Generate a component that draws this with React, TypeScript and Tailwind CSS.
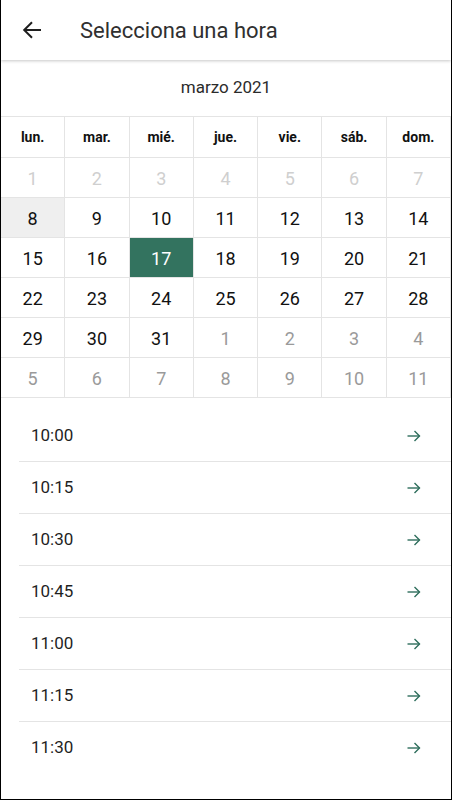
import React from "react";

const font = { fontFamily: "Roboto, 'Noto Sans', sans-serif" };

function BackArrow() {
  return (
    <svg width="20" height="20" viewBox="0 0 20 20" fill="none">
      <path d="M19 10H2.5" stroke="#1f1f1f" strokeWidth="2" />
      <path d="M10 2.2L2.2 10L10 17.8" stroke="#1f1f1f" strokeWidth="2" fill="none" />
    </svg>
  );
}

function GoArrow() {
  return (
    <svg width="14" height="12" viewBox="0 0 14 12" fill="none">
      <path d="M0.5 6H12.5" stroke="#2e6e5c" strokeWidth="1.4" />
      <path d="M7.5 1L12.5 6L7.5 11" stroke="#2e6e5c" strokeWidth="1.4" fill="none" />
    </svg>
  );
}

type Day = { n: number; kind: "past" | "cur" | "next" };

const days: Day[] = [
  ...[1, 2, 3, 4, 5, 6, 7].map((n) => ({ n, kind: "past" as const })),
  ...Array.from({ length: 24 }, (_, i) => ({ n: i + 8, kind: "cur" as const })),
  ...[1, 2, 3, 4, 5, 6, 7, 8, 9, 10, 11].map((n) => ({ n, kind: "next" as const })),
];

const heads = ["lun.", "mar.", "mié.", "jue.", "vie.", "sáb.", "dom."];
const times = ["10:00", "10:15", "10:30", "10:45", "11:00", "11:15", "11:30"];

export default function App() {
  return (
    <div
      className="w-[452px] h-[800px] bg-white border-l border-r border-b border-black overflow-hidden flex flex-col"
      style={font}
    >
      <div className="h-[60px] shrink-0 flex items-center relative z-10 bg-white shadow-[0_1px_3px_rgba(0,0,0,0.22)]">
        <div className="w-[79px] pl-[21px] flex items-center">
          <BackArrow />
        </div>
        <div className="text-[22px] font-normal text-[#303030]">Selecciona una hora</div>
      </div>
      <div className="h-[56px] shrink-0 flex items-center justify-center text-[17px] text-[#2b2b2b]">
        marzo 2021
      </div>
      <div className="grid grid-cols-7 border-t border-[#e4e4e4]">
        {heads.map((h) => (
          <div
            key={h}
            className="h-[41px] flex items-center justify-center text-[14px] font-bold text-[#111] border-r border-b border-[#e4e4e4]"
          >
            {h}
          </div>
        ))}
        {days.map((d, i) => {
          const selected = d.kind === "cur" && d.n === 17;
          const hovered = d.kind === "cur" && d.n === 8;
          const color =
            d.kind === "past" ? "text-[#cfcfcf]" : d.kind === "next" ? "text-[#9a9a9a]" : "text-[#111]";
          return (
            <div
              key={i}
              className={`h-10 flex items-center justify-center pt-[2px] text-[18px] border-r border-b border-[#e4e4e4] ${
                selected ? "bg-[#33735f] text-white" : hovered ? "bg-[#efefef] " + color : color
              }`}
            >
              {d.n}
            </div>
          );
        })}
      </div>
      <div className="pt-[12px] pl-[18px]">
        {times.map((t, i) => (
          <div
            key={t}
            className={`h-[52px] flex items-center justify-between pl-3 pr-[30px] ${
              i < times.length - 1 ? "border-b border-[#e4e4e4]" : ""
            }`}
          >
            <span className="text-[17px] text-[#1f1f1f]">{t}</span>
            <GoArrow />
          </div>
        ))}
      </div>
    </div>
  );
}
